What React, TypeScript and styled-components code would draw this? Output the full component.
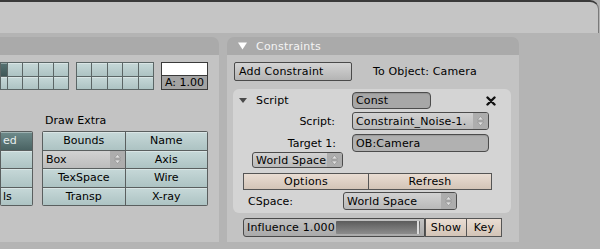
import React from "react";
import styled, { createGlobalStyle } from "styled-components";

const GlobalStyle = createGlobalStyle`
    *, *::before, *::after {
        box-sizing: border-box;
    }
    html, body {
        margin: 0;
        padding: 0;
    }
    body {
        width: 600px;
        height: 249px;
        overflow: hidden;
        background: #b4b4b4;
        font-family: "DejaVu Sans", "Liberation Sans", sans-serif;
        font-size: 11px;
        color: #000;
    }
`;

const Window = styled.div`
    width: 600px;
    height: 249px;
    display: flex;
    flex-direction: column;
    background: #b4b4b4;
    overflow: hidden;
`;

const TopStrip = styled.div`
    height: 33px;
    margin-right: 1px;
    background: #c5c5c5;
    border-top: 2px solid #3a3a3a;
    border-right: 1px solid #7a7a7a;
    border-top-right-radius: 9px;
`;

const PanelRow = styled.div`
    display: flex;
    gap: 8px;
    padding-top: 4px;
    height: 209px;
`;

const Panel = styled.div<{ $width: number }>`
    width: ${(p) => p.$width}px;
    display: flex;
    flex-direction: column;
`;

const PanelHeader = styled.div<{ $cut?: boolean }>`
    height: 18px;
    flex: none;
    display: flex;
    align-items: center;
    padding-left: 11px;
    background: #aaaaaa;
    color: #f4f4f4;
    border-radius: ${(p) => (p.$cut ? "0 7px 0 0" : "7px 7px 0 0")};
`;

const HeaderTitle = styled.span`
    margin-left: 9px;
    letter-spacing: 0.2px;
`;

const PanelBody = styled.div<{ $pad: string }>`
    flex: 1;
    background: #c3c3c3;
    padding: ${(p) => p.$pad};
    display: flex;
    flex-direction: column;
`;

/* ---------- left panel (Draw) ---------- */

const ColorRow = styled.div`
    display: flex;
    gap: 7px;
    height: 28px;
`;

const CellGrid = styled.div<{ $cols: string; $width: number }>`
    width: ${(p) => p.$width}px;
    display: grid;
    grid-template-columns: ${(p) => p.$cols};
    grid-template-rows: 1fr 1fr;
    gap: 1px;
    padding: 1px;
    background: #5b6666;
`;

const Cell = styled.div<{ $on?: boolean }>`
    background: ${(p) =>
        p.$on
            ? "linear-gradient(#587474, #3f5757)"
            : "linear-gradient(#c6d8d8, #adc3c3)"};
    box-shadow: inset 0 1px 0 rgba(255, 255, 255, 0.35);
`;

const Swatch = styled.div`
    width: 47px;
    border: 1px solid #3a3a3a;
    display: flex;
    flex-direction: column;
`;

const SwatchColor = styled.div`
    height: 13px;
    background: #ffffff;
    border-bottom: 1px solid #3a3a3a;
`;

const SwatchAlpha = styled.div`
    flex: 1;
    background: #a3a3a3;
    text-align: center;
    line-height: 13px;
`;

const DrawSection = styled.div`
    margin-top: 24px;
    display: grid;
    grid-template-columns: 33px 166px;
    grid-template-rows: 17px 75px;
    column-gap: 9px;
`;

const SectionLabel = styled.div`
    grid-column: 2;
    grid-row: 1;
    padding-left: 3px;
    line-height: 14px;
`;

const ButtonGrid = styled.div<{ $cols: string; $col: number }>`
    grid-row: 2;
    grid-column: ${(p) => p.$col};
    display: grid;
    grid-template-columns: ${(p) => p.$cols};
    grid-template-rows: repeat(4, 1fr);
    gap: 1px;
    padding: 1px;
    background: #5a5f5f;
    border-radius: 2px;
`;

const ToggleButton = styled.div<{ $on?: boolean; $align?: string }>`
    display: flex;
    align-items: center;
    justify-content: ${(p) => p.$align ?? "center"};
    padding: 0 2px;
    background: ${(p) =>
        p.$on
            ? "linear-gradient(#6f8b8b, #4a6363)"
            : "linear-gradient(#c6d8d8, #adc3c3)"};
    color: ${(p) => (p.$on ? "#e8eeee" : "#000")};
    box-shadow: inset 0 1px 0 rgba(255, 255, 255, 0.35);
    white-space: nowrap;
    overflow: hidden;
`;

const MenuCell = styled.div`
    display: flex;
    align-items: center;
    background: linear-gradient(#d2d2d2, #bcbcbc);
`;

const MenuText = styled.span`
    flex: 1;
    padding-left: 3px;
`;

const ArrowBox = styled.span`
    width: 15px;
    align-self: stretch;
    display: flex;
    align-items: center;
    justify-content: center;
    background: #adadad;
`;

/* ---------- right panel (Constraints) ---------- */

const AddRow = styled.div`
    display: flex;
    align-items: center;
    height: 19px;
`;

const GrayButton = styled.div<{ $width: number }>`
    width: ${(p) => p.$width}px;
    height: 100%;
    display: flex;
    align-items: center;
    padding-left: 4px;
    border: 1px solid #4a4a4a;
    border-radius: 2px;
    background: linear-gradient(#d4d4d4, #b4b4b4);
    letter-spacing: 0.2px;
`;

const PlainText = styled.span<{ $gap?: number }>`
    margin-left: ${(p) => p.$gap ?? 0}px;
    letter-spacing: 0.15px;
`;

const ScriptBox = styled.div`
    margin: 8px 8px 0 -1px;
    height: 124px;
    padding-top: 3px;
    background: #d4d4d4;
    border-radius: 6px;
    display: flex;
    flex-direction: column;
`;

const BoxRow = styled.div<{ $h: number; $top?: number; $left?: number }>`
    display: flex;
    align-items: stretch;
    height: ${(p) => p.$h}px;
    margin-top: ${(p) => p.$top ?? 0}px;
    padding-left: ${(p) => p.$left ?? 0}px;
`;

const Toggle = styled.div`
    width: 119px;
    padding-left: 6px;
    display: flex;
    align-items: center;
`;

const FieldLabel = styled.div<{ $w: number; $right?: boolean }>`
    width: ${(p) => p.$w}px;
    flex: none;
    display: flex;
    align-items: center;
    justify-content: ${(p) => (p.$right ? "flex-end" : "flex-start")};
`;

const TextField = styled.div<{ $w: number; $bg?: string }>`
    width: ${(p) => p.$w}px;
    display: flex;
    align-items: center;
    padding-left: 3px;
    border: 1px solid #4c4c4c;
    border-radius: 4px;
    background: ${(p) => p.$bg ?? "#a7a7a7"};
    box-shadow: inset 0 1px 1px rgba(0, 0, 0, 0.12);
    letter-spacing: 0.15px;
`;

const Dropdown = styled.div<{ $w: number }>`
    width: ${(p) => p.$w}px;
    display: flex;
    align-items: stretch;
    border: 1px solid #4c4c4c;
    border-radius: 3px;
    overflow: hidden;
    background: linear-gradient(#d2d2d2, #b9b9b9);
    letter-spacing: 0.15px;
`;

const DropText = styled.span`
    flex: 1;
    display: flex;
    align-items: center;
    padding-left: 3px;
    white-space: nowrap;
    overflow: hidden;
`;

const CloseIcon = styled.div`
    margin-left: 55px;
    display: flex;
    align-items: center;
`;

const BeigeButton = styled.div<{ $w: number }>`
    width: ${(p) => p.$w}px;
    display: flex;
    align-items: center;
    justify-content: center;
    border: 1px solid #555;
    background: linear-gradient(#e9ddd3, #d3c4b7);
    letter-spacing: 0.2px;
`;

const Slider = styled.div`
    width: 182px;
    display: flex;
    align-items: stretch;
    border: 1px solid #4a4a4a;
    border-radius: 3px 0 0 3px;
    background: linear-gradient(#c2c2c2, #a9a9a9);
    overflow: hidden;
`;

const SliderLabel = styled.span`
    width: 92px;
    flex: none;
    padding-left: 3px;
    display: flex;
    align-items: center;
    white-space: nowrap;
    letter-spacing: 0.15px;
`;

const SliderTrack = styled.span`
    flex: 1;
    margin: 2px 4px 2px 0;
    display: flex;
    justify-content: flex-end;
    background: linear-gradient(#5c5c5c, #8c8c8c);
    border-radius: 1px;
`;

const SliderHandle = styled.span`
    width: 2px;
    margin-right: 1px;
    background: #dcdcdc;
`;

const UpDown = () => (
    <svg width="7" height="10" viewBox="0 0 7 10">
        <path d="M3.5 0.5 L6.5 4 L0.5 4 Z" fill="#e2e2e2" stroke="#8a8a8a" strokeWidth="0.6" />
        <path d="M3.5 9.5 L6.5 6 L0.5 6 Z" fill="#e2e2e2" stroke="#8a8a8a" strokeWidth="0.6" />
    </svg>
);

const Arrow = () => (
    <ArrowBox>
        <UpDown />
    </ArrowBox>
);

const App = () => {
    return (
        <Window>
            <GlobalStyle />
            <TopStrip />
            <PanelRow>
                <Panel $width={219}>
                    <PanelHeader $cut />
                    <PanelBody $pad="7px 0 0 0">
                        <ColorRow>
                            <CellGrid $width={69} $cols="6px repeat(4, 1fr)">
                                {Array.from({ length: 10 }).map((_, i) => (
                                    <Cell key={i} $on={i === 0} />
                                ))}
                            </CellGrid>
                            <CellGrid $width={78} $cols="repeat(5, 1fr)">
                                {Array.from({ length: 10 }).map((_, i) => (
                                    <Cell key={i} />
                                ))}
                            </CellGrid>
                            <Swatch>
                                <SwatchColor />
                                <SwatchAlpha>A: 1.00</SwatchAlpha>
                            </Swatch>
                        </ColorRow>
                        <DrawSection>
                            <SectionLabel>Draw Extra</SectionLabel>
                            <ButtonGrid $cols="1fr" $col={1}>
                                <ToggleButton $on $align="flex-start">ed</ToggleButton>
                                <ToggleButton />
                                <ToggleButton />
                                <ToggleButton $align="flex-start">ls</ToggleButton>
                            </ButtonGrid>
                            <ButtonGrid $cols="1fr 1fr" $col={2}>
                                <ToggleButton>Bounds</ToggleButton>
                                <ToggleButton>Name</ToggleButton>
                                <MenuCell>
                                    <MenuText>Box</MenuText>
                                    <Arrow />
                                </MenuCell>
                                <ToggleButton>Axis</ToggleButton>
                                <ToggleButton>TexSpace</ToggleButton>
                                <ToggleButton>Wire</ToggleButton>
                                <ToggleButton>Transp</ToggleButton>
                                <ToggleButton>X-ray</ToggleButton>
                            </ButtonGrid>
                        </DrawSection>
                    </PanelBody>
                </Panel>

                <Panel $width={292}>
                    <PanelHeader>
                        <svg width="9" height="8" viewBox="0 0 9 8">
                            <path d="M0 0.5 L9 0.5 L4.5 7.5 Z" fill="#ffffff" />
                        </svg>
                        <HeaderTitle>Constraints</HeaderTitle>
                    </PanelHeader>
                    <PanelBody $pad="7px 0 0 7px">
                        <AddRow>
                            <GrayButton $width={118}>Add Constraint</GrayButton>
                            <PlainText $gap={21}>To Object: Camera</PlainText>
                        </AddRow>

                        <ScriptBox>
                            <BoxRow $h={17}>
                                <Toggle>
                                    <svg width="8" height="5" viewBox="0 0 8 5">
                                        <path d="M0 0 L8 0 L4 5 Z" fill="#4a4a4a" />
                                    </svg>
                                    <PlainText $gap={9}>Script</PlainText>
                                </Toggle>
                                <TextField $w={79}>Const</TextField>
                                <CloseIcon>
                                    <svg width="10" height="10" viewBox="0 0 10 10">
                                        <path d="M1.5 1.5 L8.5 8.5 M8.5 1.5 L1.5 8.5" stroke="#111" strokeWidth="2.4" strokeLinecap="round" />
                                    </svg>
                                </CloseIcon>
                            </BoxRow>

                            <BoxRow $h={18} $top={3}>
                                <FieldLabel $w={102} $right>Script:</FieldLabel>
                                <Dropdown $w={137} style={{ marginLeft: 17 }}>
                                    <DropText>Constraint_Noise-1.</DropText>
                                    <Arrow />
                                </Dropdown>
                            </BoxRow>

                            <BoxRow $h={18} $top={4}>
                                <FieldLabel $w={103} $right>Target 1:</FieldLabel>
                                <TextField $w={137} $bg="#b1b1b1" style={{ marginLeft: 16 }}>
                                    OB:Camera
                                </TextField>
                            </BoxRow>

                            <BoxRow $h={16} $left={19}>
                                <Dropdown $w={91}>
                                    <DropText>World Space</DropText>
                                    <Arrow />
                                </Dropdown>
                            </BoxRow>

                            <BoxRow $h={17} $top={5} $left={10}>
                                <BeigeButton $w={126}>Options</BeigeButton>
                                <BeigeButton $w={124} style={{ marginLeft: -1 }}>Refresh</BeigeButton>
                            </BoxRow>

                            <BoxRow $h={18} $top={2} $left={15}>
                                <FieldLabel $w={95}>CSpace:</FieldLabel>
                                <Dropdown $w={114}>
                                    <DropText>World Space</DropText>
                                    <Arrow />
                                </Dropdown>
                            </BoxRow>
                        </ScriptBox>

                        <BoxRow $h={19} $top={5} $left={9}>
                            <Slider>
                                <SliderLabel>Influence 1.000</SliderLabel>
                                <SliderTrack>
                                    <SliderHandle />
                                </SliderTrack>
                            </Slider>
                            <BeigeButton $w={42}>Show</BeigeButton>
                            <BeigeButton $w={36} style={{ marginLeft: -1 }}>Key</BeigeButton>
                        </BoxRow>
                    </PanelBody>
                </Panel>
            </PanelRow>
        </Window>
    );
};

export default App;
